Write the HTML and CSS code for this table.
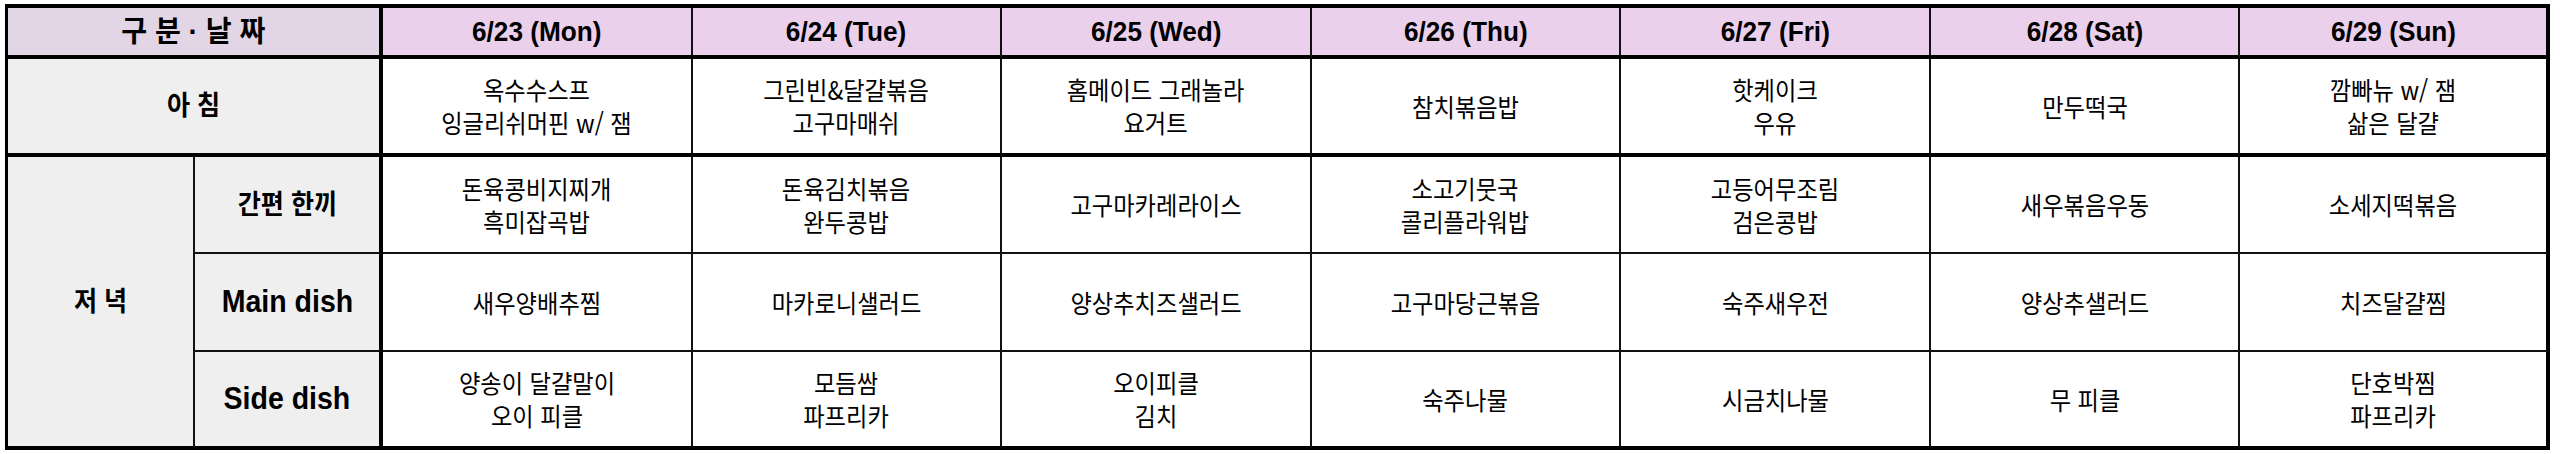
FILE: index.html
```html
<!DOCTYPE html>
<html lang="ko">
<head>
<meta charset="utf-8">
<title>식단표</title>
<link rel="stylesheet" href="styles.css">
</head>
<body>
<div class="sheet">
  <div class="cell head corner span2"><span class="t">구 분 · 날 짜</span></div>
  <div class="cell head day"><span class="t">6/23 (Mon)</span></div>
  <div class="cell head day"><span class="t">6/24 (Tue)</span></div>
  <div class="cell head day"><span class="t">6/25 (Wed)</span></div>
  <div class="cell head day"><span class="t">6/26 (Thu)</span></div>
  <div class="cell head day"><span class="t">6/27 (Fri)</span></div>
  <div class="cell head day"><span class="t">6/28 (Sat)</span></div>
  <div class="cell head day last"><span class="t">6/29 (Sun)</span></div>

  <div class="cell label span2 thick-b"><span class="t">아 침</span></div>
  <div class="cell food thick-b"><span class="t">옥수수스프<br>잉글리쉬머핀 w/ 잼</span></div>
  <div class="cell food thick-b"><span class="t">그린빈&amp;달걀볶음<br>고구마매쉬</span></div>
  <div class="cell food thick-b"><span class="t">홈메이드 그래놀라<br>요거트</span></div>
  <div class="cell food thick-b"><span class="t">참치볶음밥</span></div>
  <div class="cell food thick-b"><span class="t">핫케이크<br>우유</span></div>
  <div class="cell food thick-b"><span class="t">만두떡국</span></div>
  <div class="cell food thick-b last"><span class="t">깜빠뉴 w/ 잼<br>삶은 달걀</span></div>

  <div class="cell label dinner"><span class="t">저 녁</span></div>
  <div class="cell label sub"><span class="t">간편 한끼</span></div>
  <div class="cell food"><span class="t">돈육콩비지찌개<br>흑미잡곡밥</span></div>
  <div class="cell food"><span class="t">돈육김치볶음<br>완두콩밥</span></div>
  <div class="cell food"><span class="t">고구마카레라이스</span></div>
  <div class="cell food"><span class="t">소고기뭇국<br>콜리플라워밥</span></div>
  <div class="cell food"><span class="t">고등어무조림<br>검은콩밥</span></div>
  <div class="cell food"><span class="t">새우볶음우동</span></div>
  <div class="cell food last"><span class="t">소세지떡볶음</span></div>

  <div class="cell label sub latin"><span class="t">Main dish</span></div>
  <div class="cell food"><span class="t">새우양배추찜</span></div>
  <div class="cell food"><span class="t">마카로니샐러드</span></div>
  <div class="cell food"><span class="t">양상추치즈샐러드</span></div>
  <div class="cell food"><span class="t">고구마당근볶음</span></div>
  <div class="cell food"><span class="t">숙주새우전</span></div>
  <div class="cell food"><span class="t">양상추샐러드</span></div>
  <div class="cell food last"><span class="t">치즈달걀찜</span></div>

  <div class="cell label sub latin thick-b"><span class="t">Side dish</span></div>
  <div class="cell food thick-b"><span class="t">양송이 달걀말이<br>오이 피클</span></div>
  <div class="cell food thick-b"><span class="t">모듬쌈<br>파프리카</span></div>
  <div class="cell food thick-b"><span class="t">오이피클<br>김치</span></div>
  <div class="cell food thick-b"><span class="t">숙주나물</span></div>
  <div class="cell food thick-b"><span class="t">시금치나물</span></div>
  <div class="cell food thick-b"><span class="t">무 피클</span></div>
  <div class="cell food thick-b last"><span class="t">단호박찜<br>파프리카</span></div>
</div>
</body>
</html>
```

FILE: styles.css
```css
* { box-sizing: border-box; }

html, body {
  margin: 0;
  padding: 0;
  background: #ffffff;
}

body {
  padding: 4px 0 0 5px;
  font-family: "Liberation Sans", "Noto Sans CJK KR", Arial, sans-serif;
  color: #000;
}

.sheet {
  display: grid;
  width: 2545px;
  grid-template-columns: 187px 188px repeat(7, 1fr);
  grid-template-rows: 51px 98px 97px 98px 98px;
  border-top: 4px solid #000;
  border-left: 3px solid #000;
}

.cell {
  display: flex;
  align-items: center;
  justify-content: center;
  text-align: center;
  border-right: 2px solid #111;
  border-bottom: 2px solid #111;
  font-size: 26px;
  line-height: 34px;
  overflow: hidden;
}

.t {
  display: inline-block;
  white-space: nowrap;
  transform: scaleX(0.93);
  transform-origin: center;
}

.span2 { grid-column: span 2; border-right: 4px solid #000; }

.head {
  font-weight: bold;
  font-size: 27px;
  border-bottom: 4px solid #000;
}
.head .t { transform: scaleX(0.97); }
.corner { background: #e2d5e6; font-size: 29px; }
.day { background: #ebd0ec; }

.last { border-right: 4px solid #000; }
.thick-b { border-bottom: 4px solid #000; }

.label {
  background: #efefef;
  font-weight: bold;
  font-size: 27px;
}
.dinner {
  grid-row: span 3;
  border-bottom: 4px solid #000;
}
.sub { border-right: 4px solid #000; }
.latin { font-size: 31px; }
.latin .t { transform: scaleX(0.92); }

.food {
  background: #ffffff;
  font-family: "Noto Sans CJK KR", "Liberation Sans", sans-serif;
  font-size: 25px;
  line-height: 33px;
}
.food .t { transform: scaleX(0.93); }
```
